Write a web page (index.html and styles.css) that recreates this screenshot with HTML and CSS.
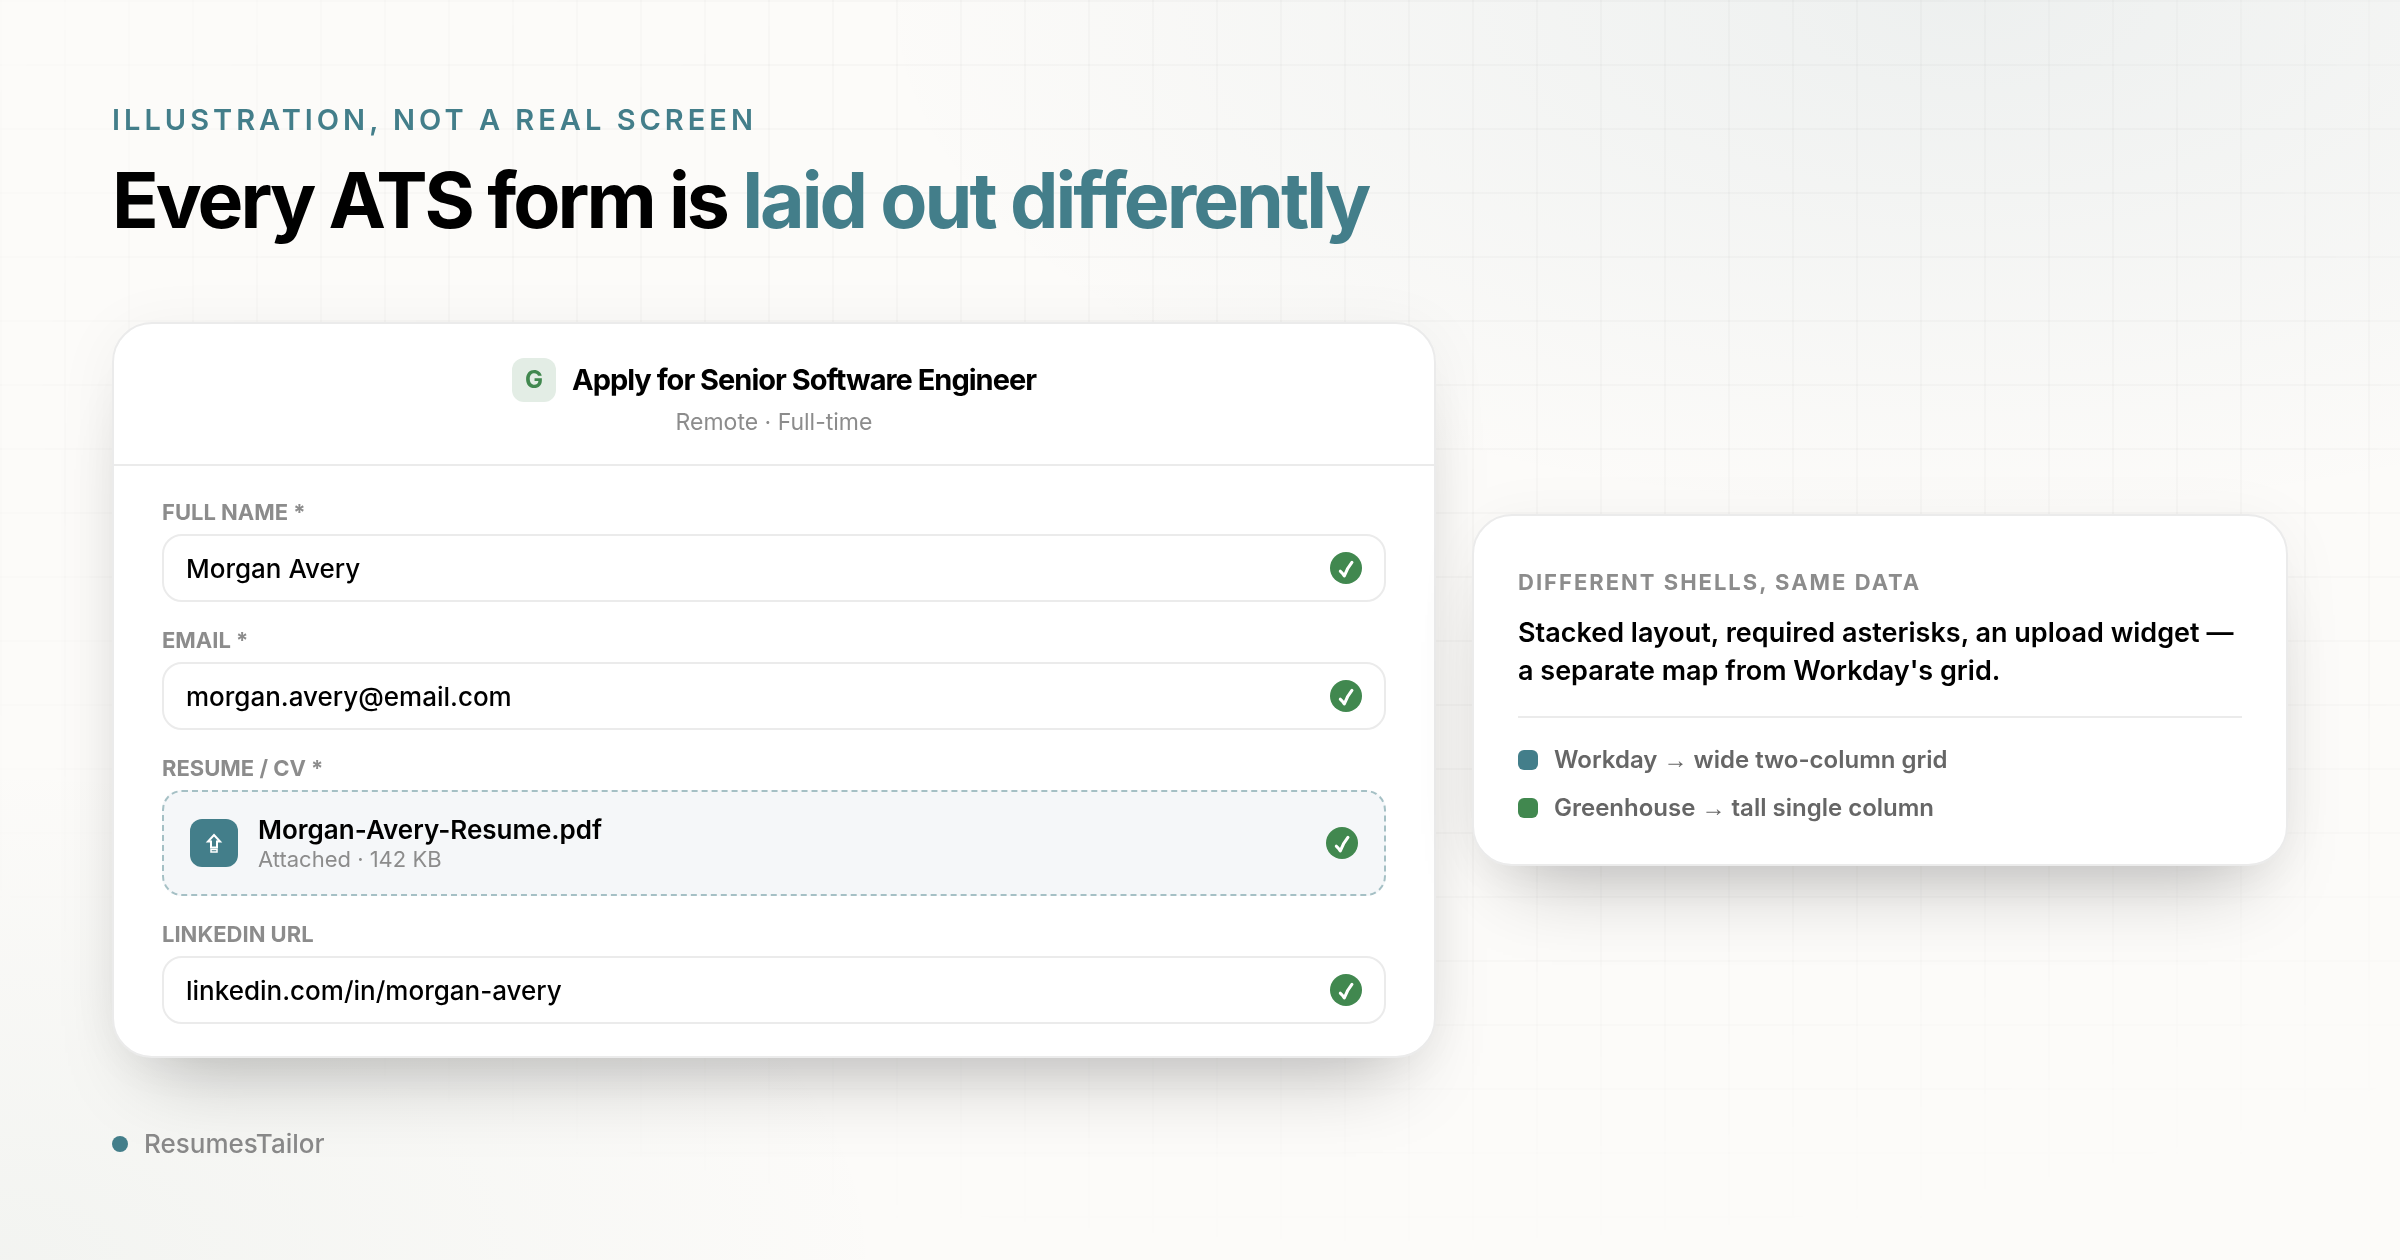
FILE: index.html
```html
<!DOCTYPE html>
<html lang="en">
<head>
    <meta charset="UTF-8">
    <meta name="viewport" content="width=device-width, initial-scale=1.0">
    <title>Every ATS form is laid out differently</title>
    <link rel="stylesheet" href="styles.css">
</head>
<body>
    <svg class="sprite" aria-hidden="true">
        <symbol id="check" viewBox="0 0 32 32">
            <path d="M10.300 19.200 C12 20.500 13 21.800 14.300 24 C16.200 18.500 18.500 14.500 22 10.300" fill="none" stroke="#fff" stroke-width="3" stroke-linecap="round" stroke-linejoin="round"/>
        </symbol>
    </svg>
    <div class="page">
        <header class="intro">
            <p class="eyebrow">Illustration, not a real screen</p>
            <h1>Every ATS form is <span>laid out differently</span></h1>
        </header>

        <main class="stage">
            <form class="card form-card">
                <div class="form-head">
                    <div class="job">
                        <span class="badge">G</span>
                        <h2>Apply for Senior Software Engineer</h2>
                    </div>
                    <p class="meta">Remote · Full-time</p>
                </div>
                <div class="form-body">
                    <div class="field">
                        <label for="name">Full name *</label>
                        <div class="box">
                            <input type="text" id="name" value="Morgan Avery">
                            <svg class="check"><use href="#check"/></svg>
                        </div>
                    </div>
                    <div class="field">
                        <label for="email">Email *</label>
                        <div class="box">
                            <input type="text" id="email" value="morgan.avery@email.com">
                            <svg class="check"><use href="#check"/></svg>
                        </div>
                    </div>
                    <div class="field">
                        <label for="resume">Resume / CV *</label>
                        <div class="box upload">
                            <button type="button" id="resume" class="upload-btn" aria-label="Upload resume">
                                <svg viewBox="0 0 48 48" fill="none" stroke="#fff" stroke-width="2">
                                    <path d="M24 16 L30 22.500 H27 V28.500 H21 V22.500 H18 Z"/>
                                    <path d="M21 30.500 H27 V33 H21 Z" stroke-width="1.500"/>
                                </svg>
                            </button>
                            <div class="file">
                                <p class="file-name">Morgan-Avery-Resume.pdf</p>
                                <p class="file-meta">Attached · 142 KB</p>
                            </div>
                            <svg class="check"><use href="#check"/></svg>
                        </div>
                    </div>
                    <div class="field">
                        <label for="linkedin">LinkedIn URL</label>
                        <div class="box">
                            <input type="text" id="linkedin" value="linkedin.com/in/morgan-avery">
                            <svg class="check"><use href="#check"/></svg>
                        </div>
                    </div>
                </div>
            </form>

            <aside class="card note">
                <h3>Different shells, same data</h3>
                <p class="note-text">Stacked layout, required asterisks, an upload widget — a separate map from Workday's grid.</p>
                <ul class="legend">
                    <li><i class="swatch teal"></i><p>Workday <span class="arrow">→</span> wide two-column grid</p></li>
                    <li><i class="swatch green"></i><p>Greenhouse <span class="arrow">→</span> tall single column</p></li>
                </ul>
            </aside>
        </main>

        <footer class="brand"><i class="dot"></i>ResumesTailor</footer>
    </div>
</body>
</html>
```
FILE: styles.css
```css
* {
    box-sizing: border-box;
    margin: 0;
    padding: 0;
}
body {
    min-height: 100vh;
    font-family: Inter, "Liberation Sans", sans-serif;
    color: #000;
    background:
        radial-gradient(ellipse 1100px 520px at 82% 0, rgba(67, 110, 125, 0.08), transparent),
        radial-gradient(ellipse 900px 500px at 0 100%, rgba(67, 110, 90, 0.05), transparent),
        #fcfbf9;
}
/* faint grid that fades out towards the edges */
body::before {
    content: "";
    position: fixed;
    inset: 0;
    z-index: -1;
    background-image:
        linear-gradient(rgba(0, 0, 0, 0.02) 2px, transparent 2px),
        linear-gradient(90deg, rgba(0, 0, 0, 0.02) 2px, transparent 2px);
    background-size: 64px 64px;
    mask-image: radial-gradient(ellipse 75% 70% at 58% 32%, #000 50%, transparent);
}
.sprite {
    display: none;
}
.page {
    padding: 100px 112px 80px;
}
.eyebrow {
    font-size: 29px;
    line-height: 40px;
    font-weight: 600;
    letter-spacing: 4px;
    text-transform: uppercase;
    color: #437e8a;
}
h1 {
    margin-top: 12px;
    font-size: 77px;
    line-height: 96px;
    font-weight: 700;
    letter-spacing: -3px;
}
h1 span {
    color: #437e8a;
}
.stage {
    display: grid;
    grid-template-columns: 1324fr 816fr;
    gap: 36px;
    align-items: center;
    margin-top: 74px;
}
.card {
    background: #fff;
    border: 2px solid #ebebeb;
    border-radius: 40px;
    box-shadow: 0 48px 80px -40px rgba(0, 0, 0, 0.28), 0 8px 64px rgba(0, 0, 0, 0.05);
}
.form-head {
    padding: 32px 48px 28px;
    border-bottom: 2px solid #ebebeb;
    text-align: center;
}
.job {
    display: flex;
    align-items: center;
    justify-content: center;
    gap: 16px;
    height: 48px;
}
.badge {
    width: 44px;
    height: 44px;
    border-radius: 12px;
    background: #e3ede5;
    color: #41884f;
    font-size: 24px;
    line-height: 44px;
    font-weight: 700;
}
h2 {
    font-size: 29px;
    line-height: 36px;
    font-weight: 700;
    letter-spacing: -1px;
}
.meta {
    margin-top: 4px;
    font-size: 23px;
    line-height: 28px;
    color: #8c8c8c;
}
.form-body {
    display: flex;
    flex-direction: column;
    gap: 24px;
    padding: 32px 48px;
}
.field {
    display: flex;
    flex-direction: column;
    gap: 8px;
}
.field label {
    font-size: 22px;
    line-height: 28px;
    font-weight: 700;
    text-transform: uppercase;
    color: #8c8c8c;
}
.box {
    display: flex;
    align-items: center;
    height: 68px;
    padding: 0 22px;
    border: 2px solid #ebebeb;
    border-radius: 20px;
}
.box input {
    flex: 1;
    min-width: 0;
    border: 0;
    outline: 0;
    background: none;
    font-family: inherit;
    font-size: 26px;
    font-weight: 500;
    color: #000;
}
.check {
    flex: none;
    width: 32px;
    height: 32px;
    border-radius: 50%;
    background: #41884f;
}
.upload {
    height: 106px;
    padding: 0 26px;
    gap: 20px;
    border: 2px dashed #a5c0c5;
    background: #f5f7f9;
}
.upload-btn {
    width: 48px;
    height: 48px;
    border: 0;
    border-radius: 12px;
    background: #437e8a;
}
.upload-btn svg {
    display: block;
}
.file {
    flex: 1;
}
.file-name {
    font-size: 26px;
    line-height: 32px;
    font-weight: 600;
}
.file-meta {
    font-size: 22px;
    line-height: 26px;
    color: #8c8c8c;
}
.note {
    padding: 52px 44px 38px;
}
.note h3 {
    font-size: 22px;
    line-height: 28px;
    font-weight: 700;
    letter-spacing: 2px;
    text-transform: uppercase;
    color: #8c8c8c;
}
.note-text {
    margin-top: 18px;
    font-size: 27px;
    line-height: 38px;
    font-weight: 600;
}
.legend {
    display: flex;
    flex-direction: column;
    gap: 12px;
    margin-top: 26px;
    padding-top: 24px;
    border-top: 2px solid #ebebeb;
    list-style: none;
}
.legend li {
    display: flex;
    align-items: center;
    gap: 16px;
    font-size: 24px;
    line-height: 36px;
    font-weight: 600;
    color: #666;
}
.arrow {
    font-family: "Liberation Sans", sans-serif;
    line-height: 1;
    font-weight: 400;
}
.swatch {
    width: 20px;
    height: 20px;
    border-radius: 6px;
}
.teal {
    background: #437e8a;
}
.green {
    background: #41884f;
}
.brand {
    display: flex;
    align-items: center;
    gap: 16px;
    margin-top: 68px;
    font-size: 26px;
    line-height: 36px;
    font-weight: 500;
    color: #888;
}
.dot {
    width: 16px;
    height: 16px;
    border-radius: 50%;
    background: #437e8a;
}
```
